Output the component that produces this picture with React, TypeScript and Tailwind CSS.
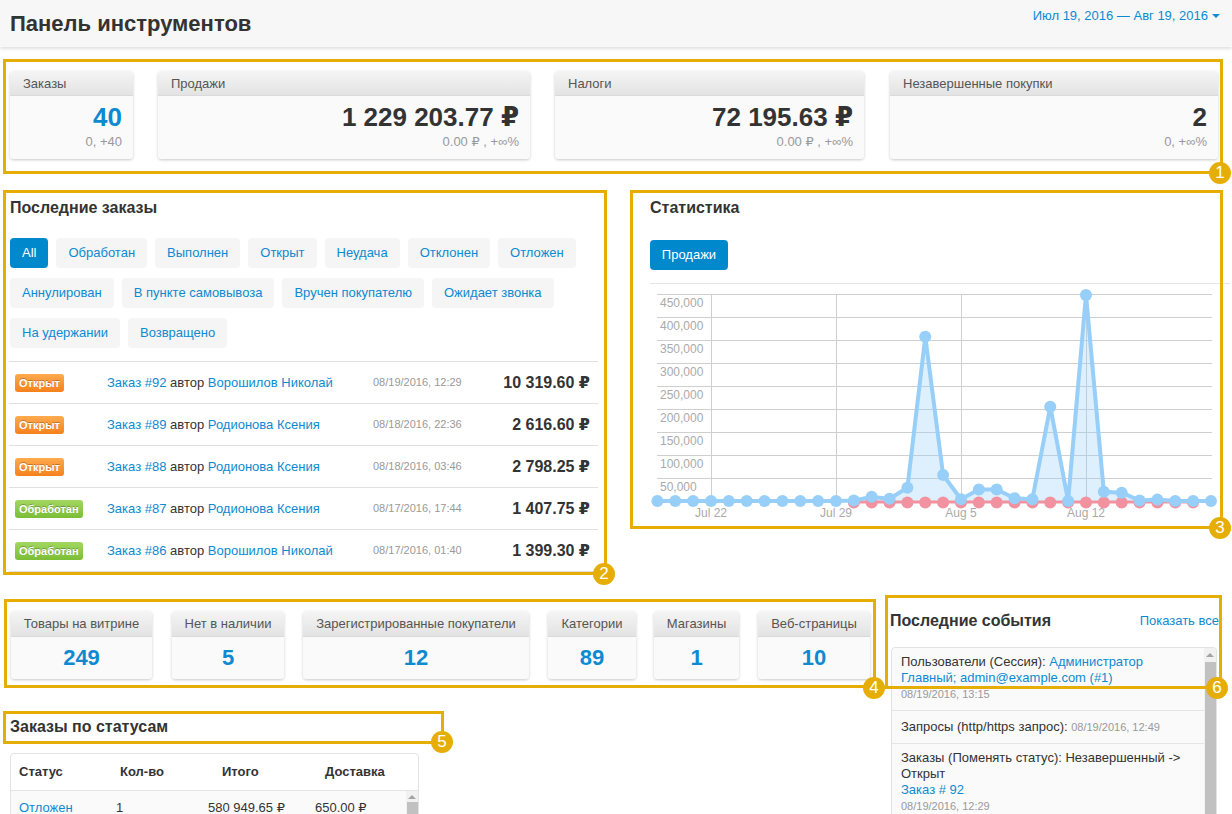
import React from 'react'

const BLUE_VALUES = [
  0, 0, 0, 0, 0, 0, 0, 0, 0, 0, 0, 1000, 9000, 5000, 29000, 357000, 56500, 4000, 25000, 25000, 6000,
  4000, 205000, 0, 448000, 20000, 18000, 1000, 3000, 0, 0, 0,
]

const STEP = 125 / 7
const px = (i: number) => 7.4 + i * STEP
const py = (v: number) => 217 - (v * 23) / 50000

const filters = [
  'All',
  'Обработан',
  'Выполнен',
  'Открыт',
  'Неудача',
  'Отклонен',
  'Отложен',
  'Аннулирован',
  'В пункте самовывоза',
  'Вручен покупателю',
  'Ожидает звонка',
  'На удержании',
  'Возвращено',
]

const orders = [
  { status: 'Открыт', id: 92, name: 'Ворошилов Николай', date: '08/19/2016, 12:29', total: '10 319.60 ₽' },
  { status: 'Открыт', id: 89, name: 'Родионова Ксения', date: '08/18/2016, 22:36', total: '2 616.60 ₽' },
  { status: 'Открыт', id: 88, name: 'Родионова Ксения', date: '08/18/2016, 03:46', total: '2 798.25 ₽' },
  { status: 'Обработан', id: 87, name: 'Родионова Ксения', date: '08/17/2016, 17:44', total: '1 407.75 ₽' },
  { status: 'Обработан', id: 86, name: 'Ворошилов Николай', date: '08/17/2016, 01:40', total: '1 399.30 ₽' },
]

function StatCard({ title, value, sub, w, blue }: { title: string; value: string; sub: string; w: string; blue?: boolean }) {
  return (
    <div className={`${w} rounded-[4px] shadow-[0_1px_3px_rgba(0,0,0,0.22)] overflow-hidden`}>
      <div className="h-[25px] bg-linear-to-b from-[#f5f5f5] to-[#e3e3e3] border-b border-[#dadada] pl-[13px] text-[13px] leading-[25px] text-[#555]">
        {title}
      </div>
      <div className="h-[63px] bg-[#fafafa] pt-[6px] pr-[11px] text-right">
        <div className={`text-[26px] font-bold leading-[30px] ${blue ? 'text-[#0d8ad0]' : 'text-[#333]'}`}>{value}</div>
        <div className="text-[13px] leading-[16px] text-[#999] mt-[2px]">{sub}</div>
      </div>
    </div>
  )
}

function MiniCard({ title, value, w }: { title: string; value: string; w: string }) {
  return (
    <div className={`${w} rounded-[4px] shadow-[0_1px_3px_rgba(0,0,0,0.22)] overflow-hidden`}>
      <div className="h-[26px] bg-linear-to-b from-[#f5f5f5] to-[#e3e3e3] border-b border-[#dadada] text-center text-[13px] leading-[26px] text-[#555] whitespace-nowrap">
        {title}
      </div>
      <div className="h-[42px] bg-[#fafafa] text-center text-[22px] font-bold leading-[42px] text-[#0d8ad0]">{value}</div>
    </div>
  )
}

function StatusLabel({ status }: { status: string }) {
  const open = status === 'Открыт'
  return (
    <span
      className={`inline-block h-[18px] px-[4px] rounded-[3px] text-[11px] font-bold leading-[18px] text-white [text-shadow:0_-1px_0_rgba(0,0,0,0.25)] ${
        open ? 'bg-linear-to-b from-[#ffab4d] to-[#f5811a]' : 'bg-linear-to-b from-[#a3d760] to-[#7bbd36]'
      }`}
    >
      {status}
    </span>
  )
}

function Chart() {
  const blueLine = BLUE_VALUES.map((v, i) => `${i === 0 ? 'M' : 'L'}${px(i).toFixed(1)} ${py(v).toFixed(1)}`).join(' ')
  const area = `${blueLine} L${px(31).toFixed(1)} 217 L${px(0).toFixed(1)} 217 Z`
  const redIdx = Array.from({ length: 20 }, (_, k) => k + 11)
  const yLabels = ['450,000', '400,000', '350,000', '300,000', '250,000', '200,000', '150,000', '100,000', '50,000']
  const xLabels = [
    { x: 61, t: 'Jul 22' },
    { x: 186, t: 'Jul 29' },
    { x: 311, t: 'Aug 5' },
    { x: 436, t: 'Aug 12' },
  ]
  return (
    <svg width="580" height="240" className="block">
      {yLabels.map((_, k) => (
        <line key={k} x1="7" x2="562" y1={10.5 + 23 * k} y2={10.5 + 23 * k} stroke="#cfcfcf" strokeWidth="1" />
      ))}
      {xLabels.map((l) => (
        <line key={l.t} x1={l.x + 0.5} x2={l.x + 0.5} y1="10" y2="217" stroke="#cfcfcf" strokeWidth="1" />
      ))}
      {yLabels.map((t, k) => (
        <text key={t} x="10" y={23 + 23 * k} fontSize="12" fill="#aaa" fontFamily="Liberation Sans, Arial, sans-serif">
          {t}
        </text>
      ))}
      {xLabels.map((l) => (
        <text key={l.t} x={l.x} y="233" fontSize="12" fill="#aaa" textAnchor="middle" fontFamily="Liberation Sans, Arial, sans-serif">
          {l.t}
        </text>
      ))}
      <path d={area} fill="rgba(151,207,249,0.32)" />
      <line x1={px(11)} x2={px(30)} y1="218" y2="218" stroke="#f2919f" strokeWidth="3" />
      {redIdx.map((i) => (
        <circle key={i} cx={px(i)} cy="218.5" r="6" fill="#f2919f" />
      ))}
      <path d={blueLine} fill="none" stroke="#97cff9" strokeWidth="4" strokeLinejoin="round" />
      {BLUE_VALUES.map((v, i) => (
        <circle key={i} cx={px(i)} cy={py(v)} r="6" fill="#97cff9" />
      ))}
    </svg>
  )
}

function Marker({ n, box, dot }: { n: number; box: string; dot: string }) {
  return (
    <>
      <div className={`absolute border-[3px] border-[#e6ae05] pointer-events-none ${box}`} />
      <div className={`absolute w-[22px] h-[22px] rounded-full bg-[#e6ae05] text-white text-[17px] leading-[22px] text-center ${dot}`}>{n}</div>
    </>
  )
}

function ScrollBar({ thumbTop }: { thumbTop: string }) {
  return (
    <div className="w-[12px] bg-[#f1f1f1] flex flex-col items-center">
      <div className={`${thumbTop} flex items-center justify-center w-full`}>
        <div className="w-0 h-0 border-x-[4px] border-x-transparent border-b-[4px] border-b-[#a3a3a3]" />
      </div>
      <div className="flex-1 w-[11px] bg-[#c1c1c1]" />
    </div>
  )
}

export default function App() {
  return (
    <div className="relative w-[1232px] h-[814px] overflow-hidden bg-white font-['Liberation_Sans','DejaVu_Sans',Arial,sans-serif] text-[13px] text-[#333]">
      {/* top bar */}
      <header className="h-[47px] bg-[#f7f7f7] shadow-[0_2px_3px_rgba(0,0,0,0.12)] flex justify-between pl-[10px] pr-[12px]">
        <h1 className="text-[22px] font-bold leading-[47px] text-[#333]">Панель инструментов</h1>
        <div className="mt-[8px] h-[16px] flex items-center gap-[4px] text-[13px] text-[#0d8ad0]">
          <span>Июл 19, 2016 — Авг 19, 2016</span>
          <span className="w-0 h-0 border-x-[4px] border-x-transparent border-t-[4px] border-t-[#0d8ad0]" />
        </div>
      </header>

      {/* summary cards */}
      <div className="flex pl-[10px] mt-[24px]">
        <StatCard w="w-[123px]" title="Заказы" value="40" sub="0, +40" blue />
        <div className="ml-[25px]">
          <StatCard w="w-[372px]" title="Продажи" value="1 229 203.77 ₽" sub="0.00 ₽ , +∞%" />
        </div>
        <div className="ml-[25px]">
          <StatCard w="w-[309px]" title="Налоги" value="72 195.63 ₽" sub="0.00 ₽ , +∞%" />
        </div>
        <div className="ml-[26px]">
          <StatCard w="w-[328px]" title="Незавершенные покупки" value="2" sub="0, +∞%" />
        </div>
      </div>

      {/* orders + statistics */}
      <div className="flex mt-[39px]">
        <div className="ml-[9px] w-[589px]">
          <h2 className="pl-[1px] text-[16px] font-bold leading-[20px]">Последние заказы</h2>
          <div className="mt-[20px] pl-[1px] flex flex-wrap gap-x-[8px] gap-y-[10px] w-[588px]">
            {filters.map((f, i) => (
              <span
                key={f}
                className={`h-[30px] px-[12px] rounded-[4px] leading-[30px] text-[13px] ${
                  i === 0 ? 'bg-[#0088cc] text-white' : 'bg-[#f5f5f5] text-[#0d8ad0]'
                }`}
              >
                {f}
              </span>
            ))}
          </div>
          <div className="mt-[13px] border-t border-[#e0e0e0]">
            {orders.map((o) => (
              <div key={o.id} className="h-[42px] border-b border-[#e0e0e0] flex items-center">
                <div className="w-[98px] pl-[6px]">
                  <StatusLabel status={o.status} />
                </div>
                <div className="w-[266px] text-[13px] whitespace-nowrap">
                  <span className="text-[#0d8ad0]">Заказ #{o.id}</span> автор{' '}
                  <span className="text-[#0d8ad0]">{o.name}</span>
                </div>
                <div className="text-[11px] text-[#999]">{o.date}</div>
                <div className="ml-auto pr-[8px] text-[16px] font-bold text-[#333]">{o.total}</div>
              </div>
            ))}
          </div>
        </div>

        <div className="ml-[52px] w-[580px]">
          <h2 className="text-[16px] font-bold leading-[20px]">Статистика</h2>
          <div className="mt-[22px] w-[78px] h-[30px] rounded-[4px] bg-[#0088cc] text-white text-[13px] leading-[30px] text-center">
            Продажи
          </div>
          <div className="mt-[13px] border-t border-[#e5e5e5]" />
          <Chart />
        </div>
      </div>

      {/* bottom */}
      <div className="flex mt-[39px]">
        <div className="w-[880px] pl-[10px]">
          <div className="ml-[1px] flex">
            <MiniCard w="w-[141px]" title="Товары на витрине" value="249" />
            <div className="ml-[20px]">
              <MiniCard w="w-[112px]" title="Нет в наличии" value="5" />
            </div>
            <div className="ml-[19px]">
              <MiniCard w="w-[226px]" title="Зарегистрированные покупатели" value="12" />
            </div>
            <div className="ml-[19px]">
              <MiniCard w="w-[88px]" title="Категории" value="89" />
            </div>
            <div className="ml-[18px]">
              <MiniCard w="w-[85px]" title="Магазины" value="1" />
            </div>
            <div className="ml-[19px]">
              <MiniCard w="w-[112px]" title="Веб-страницы" value="10" />
            </div>
          </div>

          <h2 className="mt-[38px] text-[16px] font-bold leading-[20px]">Заказы по статусам</h2>
          <div className="mt-[16px] w-[409px] h-[80px] border border-[#e3e3e3] rounded-t-[4px] flex flex-col">
            <div className="h-[37px] border-b border-[#e3e3e3] grid grid-cols-[95px_92px_107px_1fr] items-center text-[13px] font-bold">
              <div className="pl-[8px]">Статус</div>
              <div className="pl-[14px]">Кол-во</div>
              <div className="pl-[24px]">Итого</div>
              <div className="pl-[20px]">Доставка</div>
            </div>
            <div className="flex-1 flex bg-[#fafafa]">
              <div className="flex-1 pt-[9px] grid grid-cols-[95px_92px_107px_1fr] content-start text-[13px] leading-[16px]">
                <div className="pl-[8px] text-[#0d8ad0]">Отложен</div>
                <div className="pl-[10px]">1</div>
                <div className="pl-[10px]">580 949.65 ₽</div>
                <div className="pl-[10px]">650.00 ₽</div>
              </div>
              <ScrollBar thumbTop="h-[11px]" />
            </div>
          </div>
        </div>

        <div className="ml-[10px] w-[330px]">
          <div className="flex items-center justify-between h-[20px]">
            <h2 className="text-[16px] font-bold leading-[20px]">Последние события</h2>
            <span className="mr-[1px] text-[13px] text-[#0d8ad0]">Показать все</span>
          </div>
          <div className="mt-[16px] ml-[1px] w-[326px] h-[172px] border border-[#e3e3e3] rounded-t-[4px] flex overflow-hidden bg-[#fafafa]">
            <div className="flex-1 text-[13px] leading-[16px]">
              <div className="px-[9px] pt-[6px] pb-[8px] border-b border-[#e5e5e5]">
                <div>
                  Пользователи (Сессия):{' '}
                  <span className="text-[#0d8ad0]">Администратор Главный; admin@example.com (#1)</span>
                </div>
                <div className="text-[11px] text-[#999]">08/19/2016, 13:15</div>
              </div>
              <div className="px-[9px] pt-[8px] pb-[8px] border-b border-[#e5e5e5]">
                Запросы (http/https запрос): <span className="text-[11px] text-[#999]">08/19/2016, 12:49</span>
              </div>
              <div className="px-[9px] pt-[6px] pb-[8px]">
                <div>Заказы (Поменять статус): Незавершенный -&gt; Открыт</div>
                <div className="text-[#0d8ad0]">Заказ # 92</div>
                <div className="text-[11px] text-[#999]">08/19/2016, 12:29</div>
              </div>
            </div>
            <ScrollBar thumbTop="h-[14px]" />
          </div>
        </div>
      </div>

      {/* numbered annotation frames */}
      <Marker n={1} box="left-[3px] top-[59px] w-[1220px] h-[115px]" dot="left-[1209px] top-[162px]" />
      <Marker n={2} box="left-[3px] top-[190px] w-[604px] h-[385px]" dot="left-[593px] top-[563px]" />
      <Marker n={3} box="left-[630px] top-[190px] w-[593px] h-[339px]" dot="left-[1209px] top-[517px]" />
      <Marker n={4} box="left-[4px] top-[599px] w-[872px] h-[89px]" dot="left-[863px] top-[677px]" />
      <Marker n={5} box="left-[3px] top-[711px] w-[441px] h-[33px]" dot="left-[431px] top-[731px]" />
      <Marker n={6} box="left-[885px] top-[595px] w-[337px] h-[94px]" dot="left-[1206px] top-[677px]" />
    </div>
  )
}
